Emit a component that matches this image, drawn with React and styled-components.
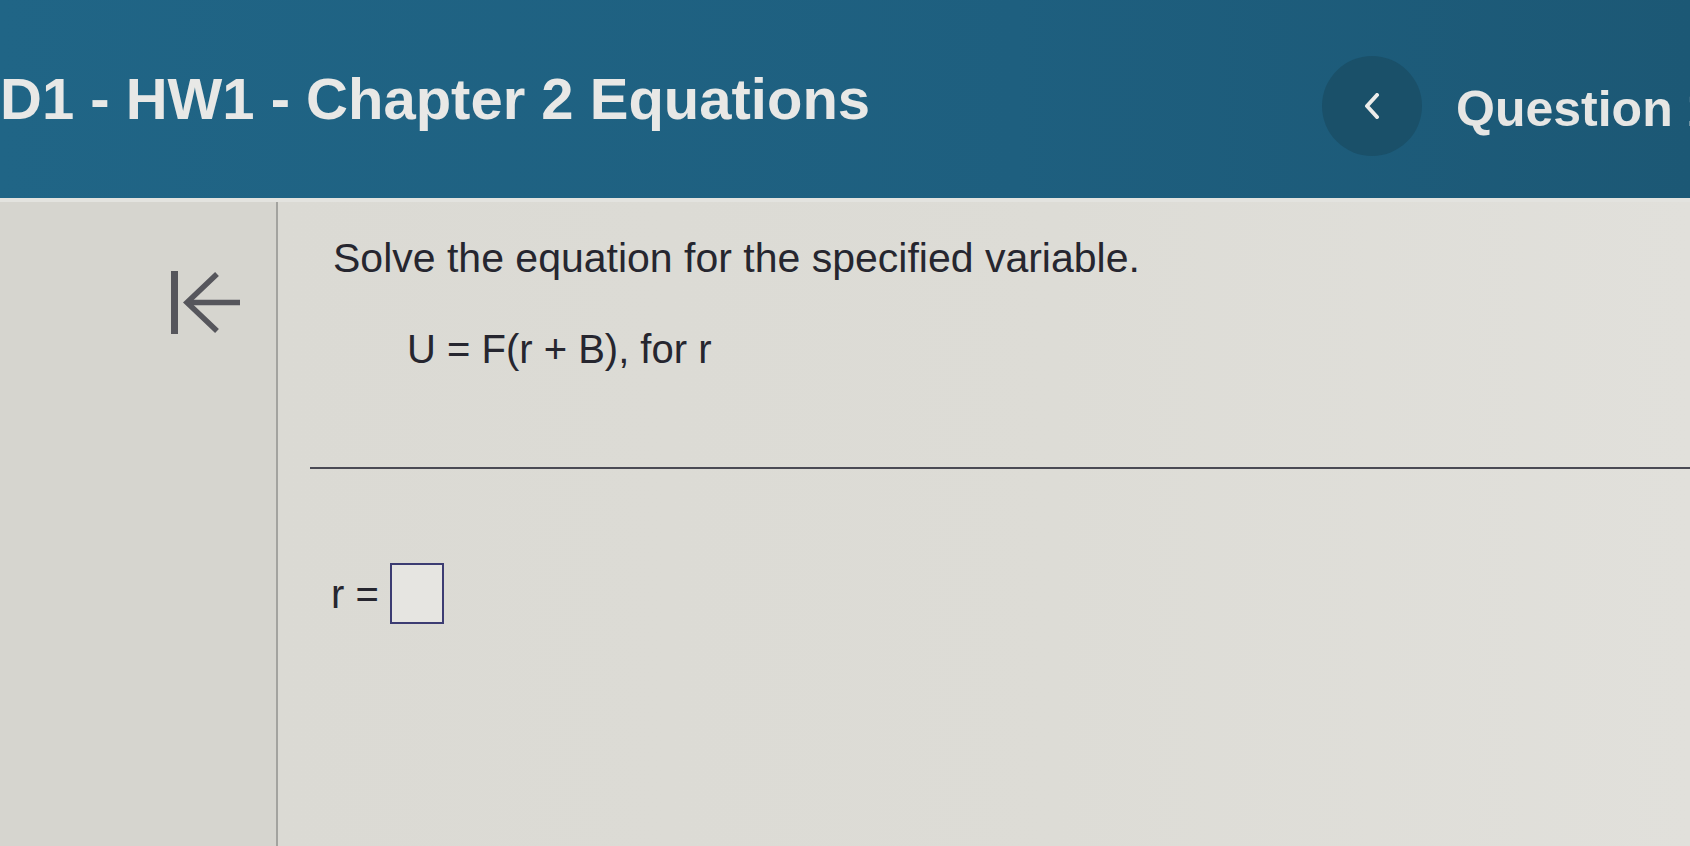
import React from "react";
import styled, { createGlobalStyle } from "styled-components";

const GlobalStyle = createGlobalStyle`
  html, body {
    margin: 0;
    padding: 0;
    background: #d9d8d2;
  }
  body {
    font-family: "Liberation Sans", Arial, Helvetica, sans-serif;
    overflow: hidden;
  }
`;

const Page = styled.div`
  display: flex;
  flex-direction: column;
  width: 1690px;
  height: 846px;
  overflow: hidden;
`;

const Header = styled.header`
  display: grid;
  grid-template-columns: 1322px 100px 1fr;
  align-items: center;
  height: 198px;
  flex-shrink: 0;
  background: linear-gradient(90deg, #206586 0%, #1e5f7f 60%, #1c5875 100%);
  border-bottom: 4px solid #e3e3df;
  overflow: hidden;
`;

const Title = styled.h1`
  margin: 0;
  font-size: 58px;
  line-height: 1.2;
  font-weight: 700;
  color: #e8e8e6;
  white-space: nowrap;
`;

const NavButton = styled.button`
  width: 100px;
  height: 100px;
  margin-top: 14px;
  border: none;
  border-radius: 50%;
  background: #1a5069;
  display: flex;
  align-items: center;
  justify-content: center;
  padding: 0;
  cursor: pointer;
`;

const QuestionLabel = styled.div`
  margin-left: 34px;
  padding-top: 19px;
  font-size: 50px;
  line-height: 1.2;
  font-weight: 700;
  color: #e6e6e4;
  white-space: nowrap;
  overflow: hidden;
`;

const Body = styled.main`
  flex: 1;
  display: grid;
  grid-template-columns: 278px 1fr;
`;

const Sidebar = styled.aside`
  padding: 68px 0 0 168px;
  background: #d6d5cf;
  border-right: 2px solid #a3a39f;
`;

const CollapseButton = styled.button`
  display: block;
  padding: 0;
  border: none;
  background: none;
  cursor: pointer;
`;

const Content = styled.section`
  padding: 32px 0 0 32px;
  background: linear-gradient(90deg, #dbdad4 0%, #dddcd6 55%, #e1e0db 100%);
  color: #26262f;
`;

const Prompt = styled.p`
  margin: 0 0 0 23px;
  font-size: 41px;
  line-height: 48px;
`;

const Equation = styled.p`
  margin: 43px 0 0 97px;
  font-size: 40px;
  line-height: 48px;
  white-space: pre;
`;

const Divider = styled.hr`
  margin: 94px 0 0 0;
  border: none;
  height: 2px;
  background: #4a4a54;
`;

const AnswerRow = styled.div`
  display: flex;
  align-items: center;
  margin: 94px 0 0 21px;
  font-size: 40px;
  line-height: 48px;
`;

const AnswerBox = styled.input`
  box-sizing: border-box;
  width: 54px;
  height: 61px;
  margin-left: 11px;
  border: 2px solid #3c3c72;
  background: #e6e5e1;
  outline: none;
`;

const ChevronLeft = () => (
  <svg width="16" height="26" viewBox="0 0 16 26" fill="none">
    <path
      d="M13 2 L3 13 L13 24"
      stroke="#ececea"
      strokeWidth="4"
      strokeLinecap="round"
      strokeLinejoin="round"
    />
  </svg>
);

const CollapseIcon = () => (
  <svg width="76" height="66" viewBox="0 0 76 66" fill="none">
    <path d="M6.5 1 V64" stroke="#56565c" strokeWidth="7" />
    <path d="M19 32.5 H72" stroke="#56565c" strokeWidth="5.5" />
    <path
      d="M49 4 L19 32.5 L49 61"
      stroke="#56565c"
      strokeWidth="5.5"
      strokeLinejoin="miter"
    />
  </svg>
);

export default function App() {
  return (
    <>
      <GlobalStyle />
      <Page>
        <Header>
          <Title>D1 - HW1 - Chapter 2 Equations</Title>
          <NavButton aria-label="Previous question">
            <ChevronLeft />
          </NavButton>
          <QuestionLabel>Question 1</QuestionLabel>
        </Header>
        <Body>
          <Sidebar>
            <CollapseButton aria-label="Collapse">
              <CollapseIcon />
            </CollapseButton>
          </Sidebar>
          <Content>
            <Prompt>Solve the equation for the specified variable.</Prompt>
            <Equation>U = F(r + B), for r</Equation>
            <Divider />
            <AnswerRow>
              r =
              <AnswerBox aria-label="r" />
            </AnswerRow>
          </Content>
        </Body>
      </Page>
    </>
  );
}
